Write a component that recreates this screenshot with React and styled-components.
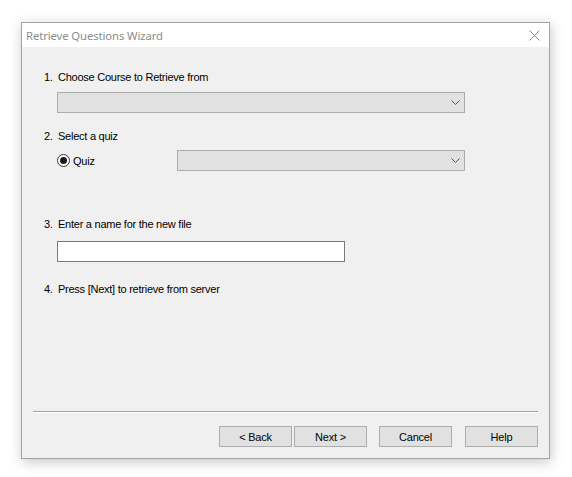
import React from "react";
import styled, { createGlobalStyle } from "styled-components";

const GlobalStyle = createGlobalStyle`
    html, body {
        margin: 0;
        padding: 0;
        background: #ffffff;
    }
    body {
        font-family: "Liberation Sans", Arial, sans-serif;
    }
`;

const Page = styled.div`
    width: 572px;
    height: 477px;
    padding: 22px 0 0 21px;
    box-sizing: border-box;
`;

const Window = styled.div`
    width: 529px;
    height: 437px;
    box-sizing: border-box;
    border: 1px solid #a3a3a3;
    background: #f0f0f0;
    box-shadow: 1px 3px 12px rgba(0, 0, 0, 0.22);
    display: flex;
    flex-direction: column;
`;

const TitleBar = styled.div`
    height: 24px;
    background: #ffffff;
    display: flex;
    align-items: center;
    justify-content: space-between;
    padding: 0 9px 0 4px;
`;

const Title = styled.span`
    font-family: "Noto Sans", "Open Sans", sans-serif;
    font-size: 11.3px;
    color: #8c8c8c;
    letter-spacing: -0.1px;
`;

const CloseIcon = styled.svg`
    width: 11px;
    height: 11px;
    display: block;
`;

const Body = styled.div`
    flex: 1;
    display: flex;
    flex-direction: column;
    padding: 23px 0 0 22px;
`;

const Step = styled.div`
    display: flex;
    align-items: center;
    height: 14px;
    font-size: 11px;
    letter-spacing: -0.25px;
    color: #000;
    margin-top: ${(props) => props.$gap || 0}px;
`;

const StepNum = styled.span`
    width: 14px;
`;

const Field = styled.div`
    display: flex;
    align-items: center;
    margin-top: ${(props) => props.$gap || 0}px;
    padding-left: 13px;
`;

const Combo = styled.div`
    width: ${(props) => props.$w}px;
    height: 21px;
    box-sizing: border-box;
    border: 1px solid #adadad;
    background: #e1e1e1;
    display: flex;
    align-items: center;
    justify-content: flex-end;
    padding-right: 4px;
`;

const Chevron = styled.svg`
    width: 9px;
    height: 5px;
    display: block;
`;

const RadioOption = styled.label`
    width: 120px;
    display: flex;
    align-items: center;
`;

const Radio = styled.span`
    width: 13px;
    height: 13px;
    box-sizing: border-box;
    border: 1px solid #333333;
    border-radius: 50%;
    background: #ffffff;
    display: flex;
    align-items: center;
    justify-content: center;
    &::after {
        content: "";
        width: 7px;
        height: 7px;
        border-radius: 50%;
        background: #1a1a1a;
    }
`;

const RadioLabel = styled.span`
    font-size: 11px;
    letter-spacing: -0.2px;
    margin-left: 3px;
`;

const TextBox = styled.div`
    width: 288px;
    height: 21px;
    box-sizing: border-box;
    border: 1px solid #7a7a7a;
    background: #ffffff;
`;

const Footer = styled.div`
    margin-top: auto;
    padding: 0 11px 11px 11px;
`;

const Separator = styled.div`
    height: 1px;
    background: #a0a0a0;
    border-bottom: 1px solid #ffffff;
`;

const ButtonRow = styled.div`
    display: flex;
    justify-content: flex-end;
    margin-top: 13px;
`;

const Button = styled.button`
    width: 73px;
    height: 21px;
    box-sizing: border-box;
    border: 1px solid #adadad;
    background: #e1e1e1;
    font-family: "Liberation Sans", Arial, sans-serif;
    font-size: 11px;
    letter-spacing: -0.2px;
    color: #000;
    padding: 0;
    margin-left: ${(props) => props.$ml || 0}px;
`;

function Dropdown({ width }) {
    return (
        <Combo $w={width}>
            <Chevron viewBox="0 0 9 5">
                <path d="M0.5 0.5 L4.5 4.5 L8.5 0.5" fill="none" stroke="#555" strokeWidth="1" />
            </Chevron>
        </Combo>
    );
}

export default function App() {
    return (
        <Page>
            <GlobalStyle />
            <Window>
                <TitleBar>
                    <Title>Retrieve Questions Wizard</Title>
                    <CloseIcon viewBox="0 0 11 11">
                        <path d="M0.5 0.5 L10.5 10.5 M10.5 0.5 L0.5 10.5" stroke="#8a8a8a" strokeWidth="1" />
                    </CloseIcon>
                </TitleBar>
                <Body>
                    <Step>
                        <StepNum>1.</StepNum>Choose Course to Retrieve from
                    </Step>
                    <Field $gap={8}>
                        <Dropdown width={408} />
                    </Field>
                    <Step $gap={16}>
                        <StepNum>2.</StepNum>Select a quiz
                    </Step>
                    <Field $gap={7}>
                        <RadioOption>
                            <Radio />
                            <RadioLabel>Quiz</RadioLabel>
                        </RadioOption>
                        <Dropdown width={288} />
                    </Field>
                    <Step $gap={46}>
                        <StepNum>3.</StepNum>Enter a name for the new file
                    </Step>
                    <Field $gap={10}>
                        <TextBox />
                    </Field>
                    <Step $gap={20}>
                        <StepNum>4.</StepNum>Press [Next] to retrieve from server
                    </Step>
                </Body>
                <Footer>
                    <Separator />
                    <ButtonRow>
                        <Button>&lt; Back</Button>
                        <Button $ml={2}>Next &gt;</Button>
                        <Button $ml={12}>Cancel</Button>
                        <Button $ml={13}>Help</Button>
                    </ButtonRow>
                </Footer>
            </Window>
        </Page>
    );
}
